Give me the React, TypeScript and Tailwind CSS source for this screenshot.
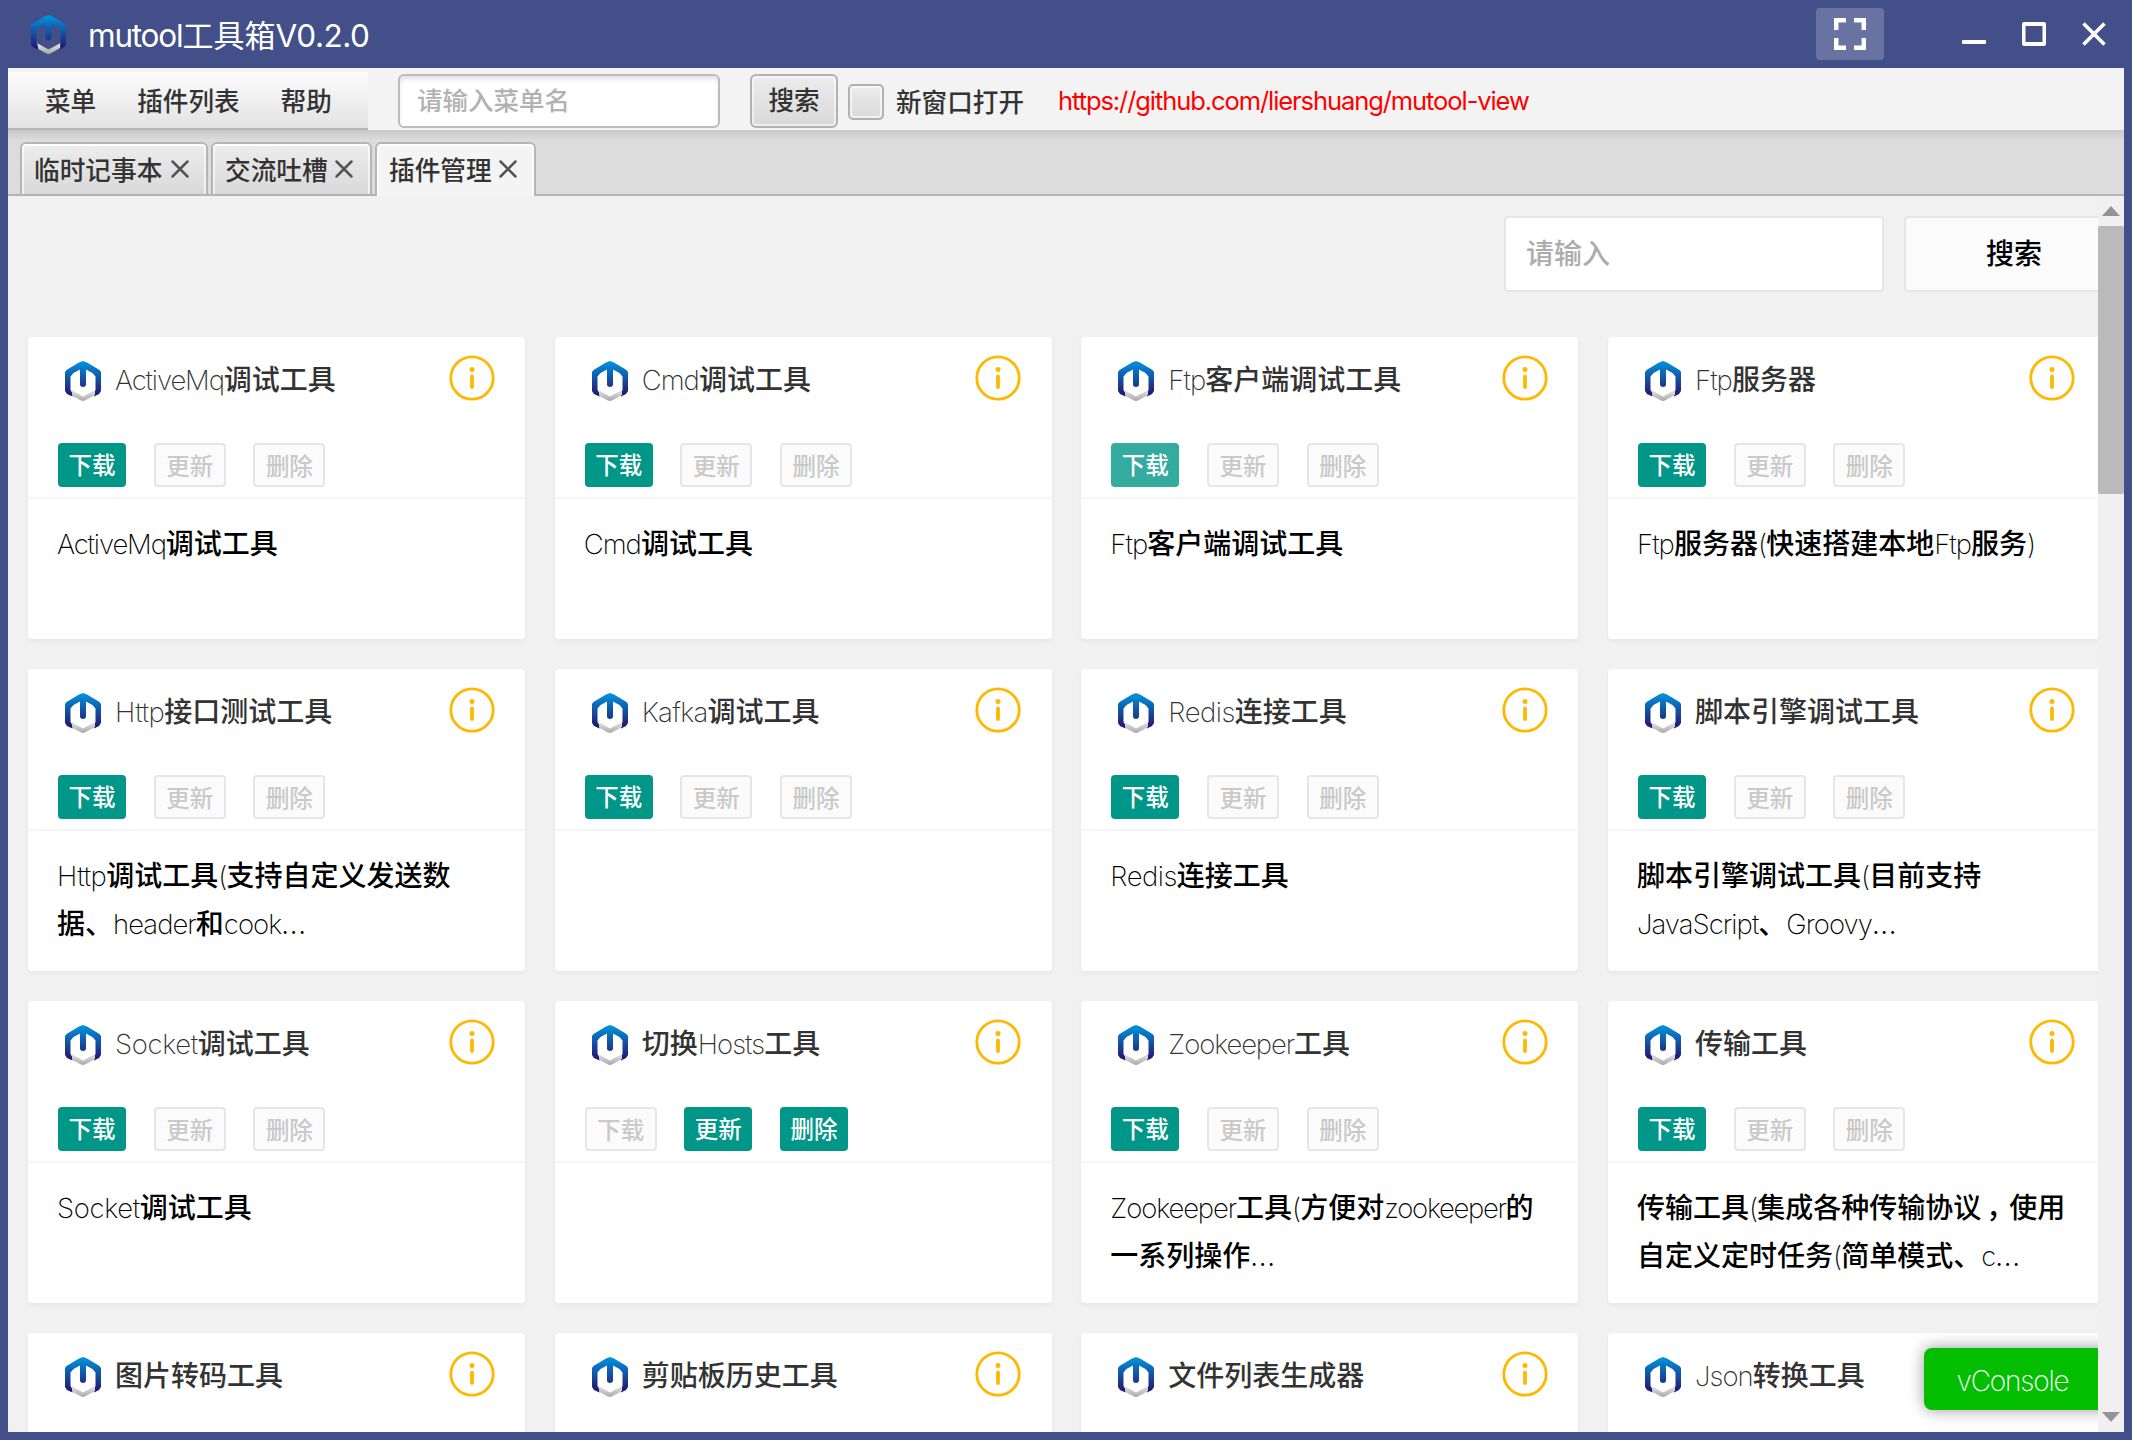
import React from 'react';
import { X } from 'lucide-react';

type Tool = { name: string; desc?: string[]; installed?: boolean; hover?: boolean };

const tools: Tool[] = [
  { name: 'ActiveMq调试工具', desc: ['ActiveMq调试工具'] },
  { name: 'Cmd调试工具', desc: ['Cmd调试工具'] },
  { name: 'Ftp客户端调试工具', desc: ['Ftp客户端调试工具'], hover: true },
  { name: 'Ftp服务器', desc: ['Ftp服务器(快速搭建本地Ftp服务)'] },
  { name: 'Http接口测试工具', desc: ['Http调试工具(支持自定义发送数', '据、header和cook...'] },
  { name: 'Kafka调试工具' },
  { name: 'Redis连接工具', desc: ['Redis连接工具'] },
  { name: '脚本引擎调试工具', desc: ['脚本引擎调试工具(目前支持', 'JavaScript、Groovy...'] },
  { name: 'Socket调试工具', desc: ['Socket调试工具'] },
  { name: '切换Hosts工具', installed: true },
  { name: 'Zookeeper工具', desc: ['Zookeeper工具(方便对zookeeper的', '一系列操作...'] },
  { name: '传输工具', desc: ['传输工具(集成各种传输协议，使用', '自定义定时任务(简单模式、c...'] },
  { name: '图片转码工具' },
  { name: '剪贴板历史工具' },
  { name: '文件列表生成器' },
  { name: 'Json转换工具' },
];

/** Cards from this index on show only their title row above the window's bottom edge. */
const firstClipped = 12;

const cjk = "font-['Noto_Sans_CJK_SC',sans-serif]";

const tracking: Record<string, string> = {
  Socket: 'tracking-[-0.350px]',
  Redis: 'tracking-[-0.500px]',
  Http: 'tracking-[-0.500px]',
  Kafka: 'tracking-[-0.700px]',
  ActiveMq: 'tracking-[-1.120px]',
  Zookeeper: 'tracking-[-1.100px]',
  zookeeper: 'tracking-[-1.300px]',
};

/** Sets Latin runs in a thin face and Chinese runs in a medium one. */
function Mixed({ text }: { text: string }) {
  const parts = text.split(/(\.\.\.|，|[\x20-\x2d\x2f-\x7e]+)/).filter(Boolean);
  return (
    <>
      {parts.map((p, i) =>
        p === '，' ? (
          <span key={i} className="inline-block w-7 pr-1 text-center leading-none font-medium [font-feature-settings:'halt']">{p}</span>
        ) : p === '...' ? (
          <span key={i} className="font-['Inter',sans-serif] text-[27.500px] leading-none font-light tracking-[0.700px]">{p}</span>
        ) : /^[\x20-\x7e]/.test(p) ? (
          <span key={i} className={`font-['Inter',sans-serif] text-[27.500px] leading-none font-extralight ${tracking[p] ?? 'tracking-[-0.950px]'}`}>{p}</span>
        ) : (
          <span key={i} className="leading-none font-medium">{p}</span>
        ),
      )}
    </>
  );
}

function Logo({ id, className }: { id: string; className: string }) {
  return (
    <svg viewBox="0 0 36 40" className={className}>
      <defs>
        <linearGradient id={`${id}b`} x1="0" y1="0" x2="0" y2="1">
          <stop offset="0" stopColor="#0096e0" />
          <stop offset="0.3" stopColor="#0a6dbd" />
          <stop offset="0.65" stopColor="#1b3e8f" />
          <stop offset="1" stopColor="#21116f" />
        </linearGradient>
        <linearGradient id={`${id}g`} x1="0" y1="0" x2="0" y2="1">
          <stop offset="0" stopColor="#e4e4e4" />
          <stop offset="1" stopColor="#a9a9a9" />
        </linearGradient>
      </defs>
      <path
        d="M18 0 L22 1.5 L34.5 9 L36 11 V30 L34 33 L29 35.5 V32 L30.5 29 V15.5 L27.5 12 L21 8.5 V24 Q20.500 26 18 26 Q15.500 26 15 24 V8.500 L8.500 12 L5.500 15.500 V29 L7.500 32 V35.500 L2 33 L0 30 V11 L1.500 9 L14 1.500 Z"
        fill={`url(#${id}b)`}
      />
      <path d="M6.500 29 L18 35.500 L30 29 V34 L20.500 39.300 Q18 40.600 15.500 39.300 L7.500 35 Z" fill={`url(#${id}g)`} />
    </svg>
  );
}

function InfoIcon() {
  return (
    <svg viewBox="0 0 46 46" className="size-[46px]">
      <circle cx="23" cy="23" r="21.200" fill="none" stroke="#FFB800" strokeWidth="2.800" />
      <circle cx="23" cy="14.500" r="2.500" fill="#FFB800" />
      <path d="M23 21.500 V32" stroke="#FFB800" strokeWidth="3.800" strokeLinecap="round" />
    </svg>
  );
}

function Action({ label, on, hover }: { label: string; on: boolean; hover?: boolean }) {
  if (on) {
    return (
      <button className={`flex h-11 w-[68px] items-center justify-center rounded-[4px] pb-px text-[23.500px] leading-none font-medium text-white ${hover ? 'bg-[#33ab9f]' : 'bg-[#009688]'}`}>
        {label}
      </button>
    );
  }
  return (
    <button className="flex h-11 w-[72px] items-center justify-center rounded-[4px] border-2 border-[#e6e6e6] bg-[#fbfbfb] pt-0.5 text-[23.500px] leading-none font-medium text-[#c9c9c9]">
      {label}
    </button>
  );
}

function Card({ tool, index }: { tool: Tool; index: number }) {
  const inst = !!tool.installed;
  const clipped = index >= firstClipped;
  return (
    <section className="h-[302px] rounded-[4px] bg-white shadow-[0_2px_4px_rgba(0,0,0,0.05)]">
      <header className="flex h-[162px] flex-col justify-between border-b-2 border-[#f6f6f6] pt-[18px] pb-[10px] pl-[30px]">
        <div className="flex h-[46px] items-center">
          <Logo id={`l${index}`} className="mt-1.5 ml-[7px] h-10 w-9" />
          <h2 className="ml-[14px] h-[46px] flex-1 text-[28px] leading-[46px] whitespace-nowrap text-[#333]">
            <Mixed text={tool.name} />
          </h2>
          <div className="mr-[30.500px]"><InfoIcon /></div>
        </div>
        {!clipped && (
          <div className="flex gap-[27.700px]">
            <Action label="下载" on={!inst} hover={tool.hover} />
            <Action label="更新" on={inst} />
            <Action label="删除" on={inst} />
          </div>
        )}
      </header>
      <div className="pt-[19px] pl-[29px] text-[28px] leading-[48px] whitespace-nowrap text-black">
        {tool.desc?.map((line) => (
          <p key={line} className="h-12"><Mixed text={line} /></p>
        ))}
      </div>
    </section>
  );
}

function Tab({ label, active, width }: { label: string; active?: boolean; width: string }) {
  return (
    <div
      className={`flex items-center justify-between rounded-t-[6px] border-2 border-b-0 border-[#b5b5b5] pr-[13px] pl-3 shadow-[inset_0_2px_0_#fff,inset_2px_0_0_rgba(255,255,255,0.6),inset_-2px_0_0_rgba(255,255,255,0.6)] ${width} ${active ? 'h-[54px] bg-[#f4f4f4] pb-0.5' : 'h-[52px] bg-gradient-to-b from-[#ededed] to-[#d9d9d9]'}`}
    >
      <span className="text-[25.700px] leading-none">{label}</span>
      <X className="-mr-0.5 size-[30px] text-[#555]" strokeWidth={2} />
    </div>
  );
}

export default function App() {
  return (
    <div className={`flex h-[1440px] w-[2132px] flex-col overflow-hidden bg-[#424f89] px-2 pb-2 text-[#333] ${cjk}`}>
      <div className="flex h-[68px] shrink-0 items-center pr-[18px] pl-[23px] text-white">
        <Logo id="app" className="h-[39px] w-[35px]" />
        <h1 className="mt-px ml-[22px] flex-1 text-[31px] leading-none whitespace-nowrap">
          <span className="font-['Inter',sans-serif] text-[31.500px] font-normal tracking-[-1.200px]">mutool</span>
          <span>工具箱</span>
          <span className="font-['Inter',sans-serif] text-[31.500px] font-normal tracking-[-0.500px]">V0.2.0</span>
        </h1>
        <button className="flex h-[52px] w-[68px] items-center justify-center rounded-[4px] bg-[#6873a2]">
          <svg viewBox="0 0 32 32" className="size-8" fill="none" stroke="#fff" strokeWidth="4.500">
            <path d="M2.200 12 V2.200 H12 M20 2.200 H29.800 V12 M2.200 20 V29.800 H12 M20 29.800 H29.800 V20" />
          </svg>
        </button>
        <svg viewBox="0 0 24 24" className="ml-[78px] size-6"><rect x="0" y="18" width="24" height="4" rx="1" fill="#fff" /></svg>
        <svg viewBox="0 0 24 24" className="ml-9 size-6"><path fillRule="evenodd" d="M2 0H22Q24 0 24 2V22Q24 24 22 24H2Q0 24 0 22V2Q0 0 2 0ZM3.500 4V20H20.500V4Z" fill="#fff" /></svg>
        <svg viewBox="0 0 24 24" className="ml-9 size-6"><path d="M1.500 1.500 L22.500 22.500 M22.500 1.500 L1.500 22.500" stroke="#fff" strokeWidth="3.600" /></svg>
      </div>

      <div className="flex h-[62px] shrink-0 bg-[#f3f3f3] text-[25.600px] leading-none">
        <nav className="mt-1 flex h-[58px] w-[360px] items-center gap-[41px] border-b-2 border-[#b5b5b5] bg-gradient-to-b from-[#fcfcfc] to-[#e3e3e3] pb-px pl-[37px] font-medium whitespace-nowrap">
          <span>菜单</span><span>插件列表</span><span>帮助</span>
        </nav>
        <div className="mt-1.5 flex h-[54px] items-center">
          <div className="ml-[30px] flex h-[54px] w-[322px] items-center rounded-[6px] border-2 border-[#bcbcbc] bg-white pb-1 pl-[17px] text-[25.500px] font-medium text-[#b2b2b2] shadow-[inset_0_4px_5px_-1px_rgba(0,0,0,0.12)]">请输入菜单名</div>
          <button className="ml-[30px] flex h-[54px] w-[88px] items-center justify-center rounded-[6px] border-2 border-[#b2b2b2] bg-gradient-to-b from-[#ececec] to-[#d9d9d9] pb-1 font-medium shadow-[inset_0_0_0_2px_rgba(255,255,255,0.5)]">搜索</button>
          <span className="ml-2.5 mt-0.5 h-9 w-9 rounded-[5px] border-2 border-[#b2b2b2] bg-gradient-to-b from-[#ececec] to-[#dadada] shadow-[inset_0_0_0_2px_rgba(255,255,255,0.6)]" />
          <span className="ml-3 w-[130px] font-medium whitespace-nowrap">新窗口打开</span>
          <span className="ml-8 font-['Inter',sans-serif] text-[25.500px] font-normal tracking-[-1.080px] whitespace-nowrap text-[#f00]">https://github.com/liershuang/mutool-view</span>
        </div>
      </div>

      <div className="h-[66px] shrink-0 bg-[#dcdcdc] bg-[linear-gradient(to_bottom,#c9c9c9,#dcdcdc_10px)] pt-3 pl-3 font-medium shadow-[inset_0_-2px_0_#b4b4b4]">
        <div className="flex items-start gap-[3px]">
          <Tab label="临时记事本" width="w-[188px]" />
          <Tab label="交流吐槽" width="w-[161px]" />
          <Tab label="插件管理" width="w-[161px]" active />
        </div>
      </div>

      <div className="relative flex min-h-0 flex-1 bg-[#f1f1f1]">
        <main className="relative h-full w-[2090px] shrink-0 overflow-hidden pt-5 pl-5">
          <div className="flex w-[2096px] justify-end gap-5 text-[28px] leading-none font-medium">
            <div className="flex h-[76px] w-[380px] items-center rounded-[4px] border-2 border-[#e6e6e6] bg-white pb-1 pl-5 text-[#acacac]">请输入</div>
            <button className="flex h-[76px] w-[220px] items-center justify-center rounded-[4px] border-2 border-[#e6e6e6] bg-[#fbfbfb] pb-1 font-medium text-black">搜索</button>
          </div>
          <div className="mt-[45px] grid w-[2077px] grid-cols-4 gap-x-[29.667px] gap-y-[30px]">
            {tools.map((t, i) => <Card key={t.name} tool={t} index={i} />)}
          </div>
          <button className="absolute right-[-20px] bottom-[22px] h-[62px] w-[194px] rounded-[8px] bg-[#04be02] pt-1 pr-[17px] font-['Inter',sans-serif] text-[28px] font-extralight tracking-[-1.200px] text-white shadow-[0_0_16px_rgba(0,0,0,0.4)]">
            vConsole
          </button>
        </main>
        <div className="flex h-full w-[26px] flex-col items-center bg-[#f0f0f0]">
          <svg viewBox="0 0 18 10" className="mt-2.5 h-2.5 w-[18px] shrink-0"><path d="M9 0 L18 10 H0Z" fill="#949494" /></svg>
          <div className="mt-2.5 h-[268px] w-full shrink-0 rounded-[2px] bg-[#bababa]" />
          <svg viewBox="0 0 18 10" className="mt-auto mb-2.5 h-2.5 w-[18px] shrink-0"><path d="M9 10 L18 0 H0Z" fill="#949494" /></svg>
        </div>
      </div>
    </div>
  );
}
